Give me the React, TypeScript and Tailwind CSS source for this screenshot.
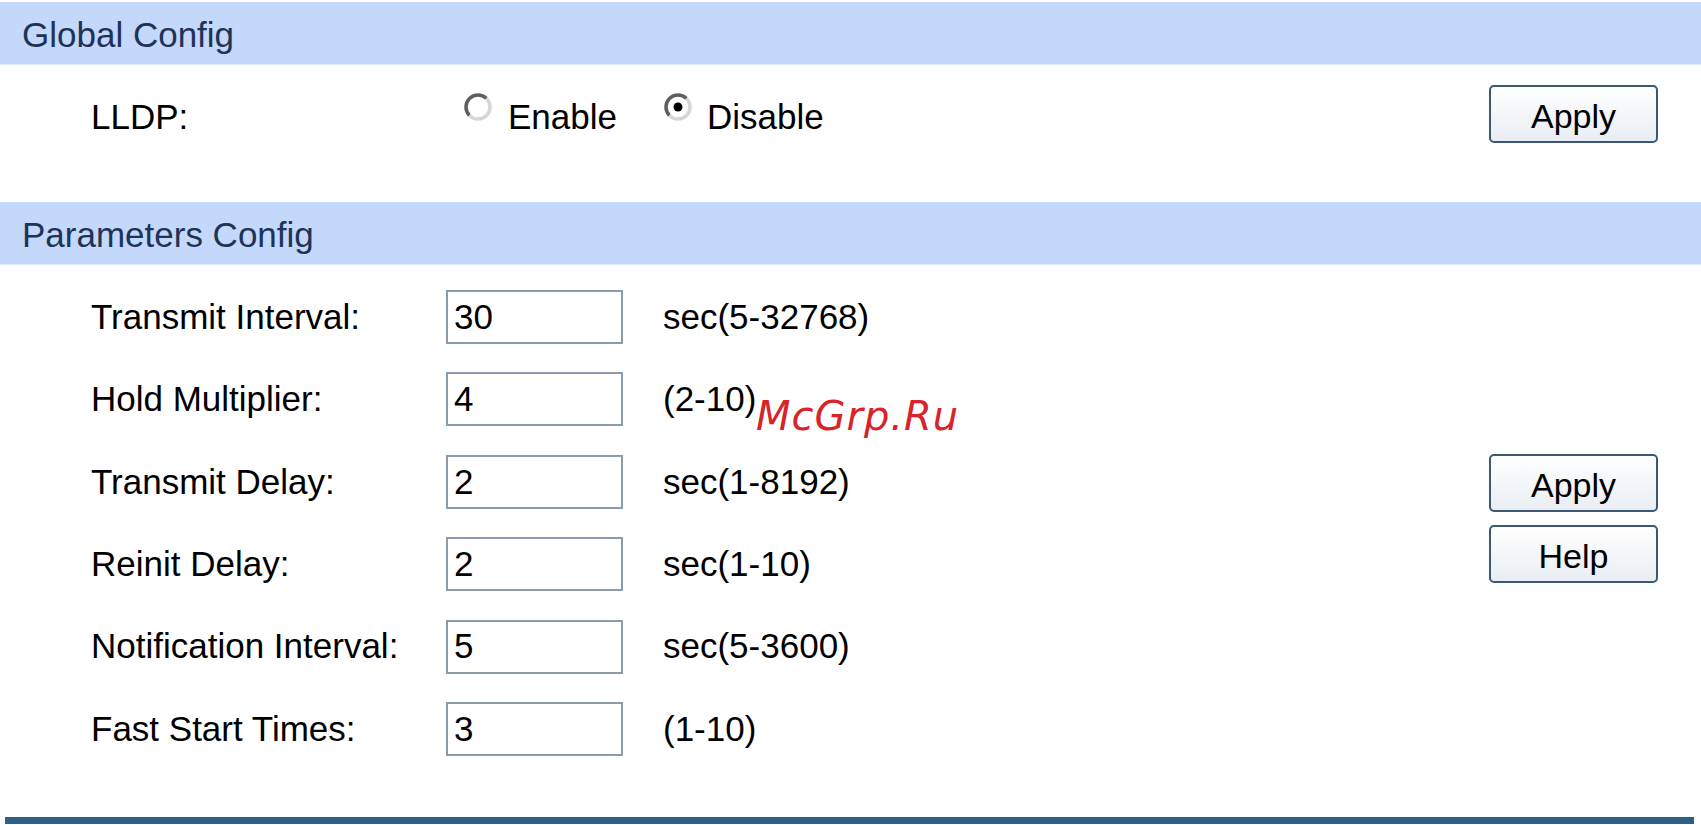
import React from 'react';

const params = [
  { label: 'Transmit Interval:', value: '30', range: 'sec(5-32768)' },
  { label: 'Hold Multiplier:', value: '4', range: '(2-10)' },
  { label: 'Transmit Delay:', value: '2', range: 'sec(1-8192)' },
  { label: 'Reinit Delay:', value: '2', range: 'sec(1-10)' },
  { label: 'Notification Interval:', value: '5', range: 'sec(5-3600)' },
  { label: 'Fast Start Times:', value: '3', range: '(1-10)' },
];

const Radio = ({ checked }: { checked?: boolean }) => (
  <svg width="30" height="30" viewBox="0 0 30 30" className="mb-[14px] shrink-0">
    <circle cx="15" cy="15" r="12" fill="#ffffff" />
    <path d="M6.5 23.5 A12 12 0 0 1 23.5 6.5" fill="none" stroke="#5f5f5f" strokeWidth="3.5" />
    <path d="M23.5 6.5 A12 12 0 0 1 6.5 23.5" fill="none" stroke="#d6d6d6" strokeWidth="3.5" />
    {checked && <circle cx="15" cy="15" r="4.5" fill="#000000" />}
  </svg>
);

const Button = ({ children }: { children: React.ReactNode }) => (
  <button className="w-[169px] h-[58px] pt-[3px] rounded-[5px] border-2 border-[#3d5875] bg-gradient-to-b from-[#ffffff] to-[#e9edf3] text-[34px] text-black leading-none">
    {children}
  </button>
);

const Band = ({ title }: { title: string }) => (
  <div className="h-[63px] bg-[#c3d8fa] flex items-center pl-[22px] pt-[4px] text-[35px] text-[#1f3357] border-b border-[#dde8fb]">
    {title}
  </div>
);

export default function App() {
  return (
    <div
      className="relative w-[1701px] h-[825px] bg-white overflow-hidden pt-[2px]"
      style={{ fontFamily: '"Liberation Sans", Arial, sans-serif' }}
    >
      <Band title="Global Config" />

      <div className="h-[137px] flex justify-between pt-[20px] pr-[43px]">
        <div className="h-[58px] flex items-center pl-[91px] text-[35px] text-black">
          <span className="w-[372px] mt-[6px]">LLDP:</span>
          <Radio />
          <span className="ml-[15px] mt-[6px]">Enable</span>
          <span className="ml-[46px]">
            <Radio checked />
          </span>
          <span className="ml-[14px] mt-[6px]">Disable</span>
        </div>
        <Button>Apply</Button>
      </div>

      <Band title="Parameters Config" />

      <div className="h-[552px] flex justify-between pt-[25px] pr-[43px]">
        <div className="flex flex-col gap-[28.4px] pl-[91px]">
          {params.map((p) => (
            <div key={p.label} className="h-[54px] flex items-center text-[35px] text-black">
              <span className="w-[355px]">{p.label}</span>
              <div className="w-[177px] h-[54px] border-2 border-[#8a9cab] flex items-center pl-[6px] bg-white">
                {p.value}
              </div>
              <span className="ml-[40px]">{p.range}</span>
            </div>
          ))}
        </div>
        <div className="flex flex-col gap-[13px] pt-[164px]">
          <Button>Apply</Button>
          <Button>Help</Button>
        </div>
      </div>

      <div className="ml-[5px] w-[1689px] h-[7px] bg-[#2e5f88]" />

      <div
        className="absolute left-[756px] top-[386px] text-[40px] italic text-[#d8232a] tracking-[1px]"
        style={{ fontFamily: '"DejaVu Sans", sans-serif' }}
      >
        McGrp.Ru
      </div>
    </div>
  );
}
